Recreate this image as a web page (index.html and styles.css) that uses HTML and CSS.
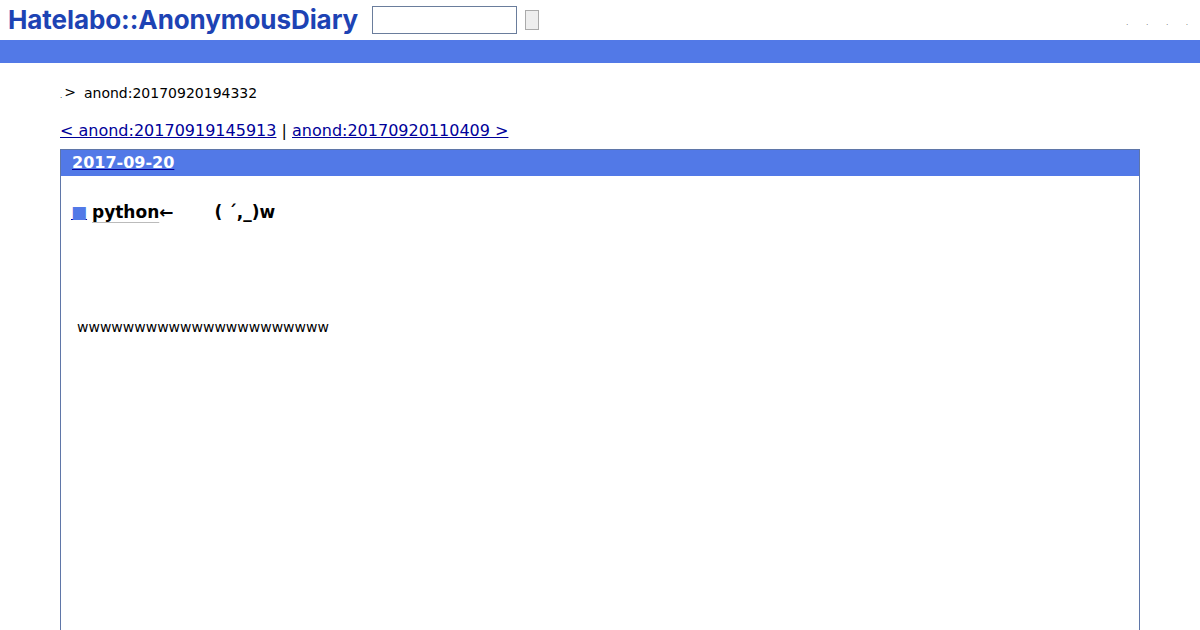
FILE: index.html
```html
<!DOCTYPE html>
<html lang="en">
<head>
  <meta charset="UTF-8">
  <title>anond:20170920194332</title>
  <link rel="stylesheet" href="styles.css">
</head>
<body>

<header class="top">
  <a class="logo" href="#">Hatelabo::AnonymousDiary</a>
  <form class="search">
    <input type="text" class="search-box">
    <button type="button" class="search-btn"></button>
  </form>
  <ul class="top-links">
    <li>.</li>
    <li>.</li>
    <li>.</li>
    <li>.</li>
  </ul>
</header>
<div class="band"></div>

<main class="content">
  <p class="crumb"><span class="crumb-dot">.</span><span class="crumb-arrow">&gt;</span><span class="crumb-id">anond:20170920194332</span></p>

  <p class="pager"><a href="#">&lt; anond:20170919145913</a> | <a href="#">anond:20170920110409 &gt;</a></p>

  <section class="day">
    <h2 class="day-title"><a href="#">2017-09-20</a></h2>
    <div class="day-body">
      <h3 class="entry-title"><a class="mark" href="#">■</a> <a class="entry-link" href="#">python</a>←<span class="gap"></span>( ´,_)w</h3>
      <p class="entry-text">wwwwwwwwwwwwwwwwwwwwww</p>
    </div>
  </section>
</main>

</body>
</html>
```

FILE: styles.css
```css
body {
  margin: 0;
  font-family: "DejaVu Sans", sans-serif;
  background: #fff;
  color: #000;
  overflow: hidden;
  height: 630px;
}

.top {
  display: flex;
  align-items: center;
  height: 40px;
  padding-left: 8px;
}

.logo {
  width: 356px;
  padding-bottom: 2px;
  font-family: Inter, sans-serif;
  font-weight: 700;
  font-size: 26px;
  letter-spacing: -0.08px;
  color: #1d43b4;
  text-decoration: none;
  white-space: nowrap;
}

.search {
  display: flex;
  align-items: center;
  margin-left: 8px;
}

.search-box {
  box-sizing: border-box;
  width: 145px;
  height: 28px;
  padding: 0;
  border: 1px solid #6a7d9c;
  background: #fff;
}

.search-btn {
  box-sizing: border-box;
  width: 14px;
  height: 20px;
  margin-left: 8px;
  padding: 0;
  border: 1px solid #aaa;
  background: #eee;
}

.top-links {
  display: flex;
  gap: 18px;
  list-style: none;
  margin: 5px 12px 0 auto;
  padding: 0;
  font-size: 6px;
  color: #222;
}

.band {
  height: 23px;
  background: #5279e7;
}

.content {
  padding: 0 60px;
}

.crumb {
  margin: 22px 0 0;
  font-size: 14px;
  line-height: 17px;
}

.crumb-dot {
  font-size: 7px;
}

.crumb-arrow {
  margin: 0 8px 0 2px;
  line-height: 0;
  vertical-align: 1px;
}

.pager {
  margin: 16px 0 0;
  font-size: 16px;
  line-height: 19px;
}

.pager a {
  color: #000099;
}

.day {
  box-sizing: border-box;
  height: 600px;
  margin-top: 9px;
  border: 1px solid #5f76a8;
}

.day-title {
  margin: 0;
  height: 26px;
  padding-left: 11px;
  background: #5279e7;
  font-size: 16px;
  line-height: 26px;
}

.day-title a {
  color: #fff;
  text-decoration-color: #000099;
}

.day-body {
  padding: 26px 10px 0;
}

.entry-title {
  margin: 0;
  font-size: 17px;
  line-height: 21px;
}

.mark {
  margin-right: -1px;
  color: #5279e7;
  font-weight: 400;
  font-size: 17px;
  text-decoration: underline #000099;
}

.entry-link {
  color: #000;
  text-decoration: underline #bbb;
  text-underline-offset: 4px;
}

.gap {
  display: inline-block;
  width: 41px;
}

.entry-text {
  margin: 96px 0 0 6px;
  font-size: 14px;
  line-height: 17px;
}
```
